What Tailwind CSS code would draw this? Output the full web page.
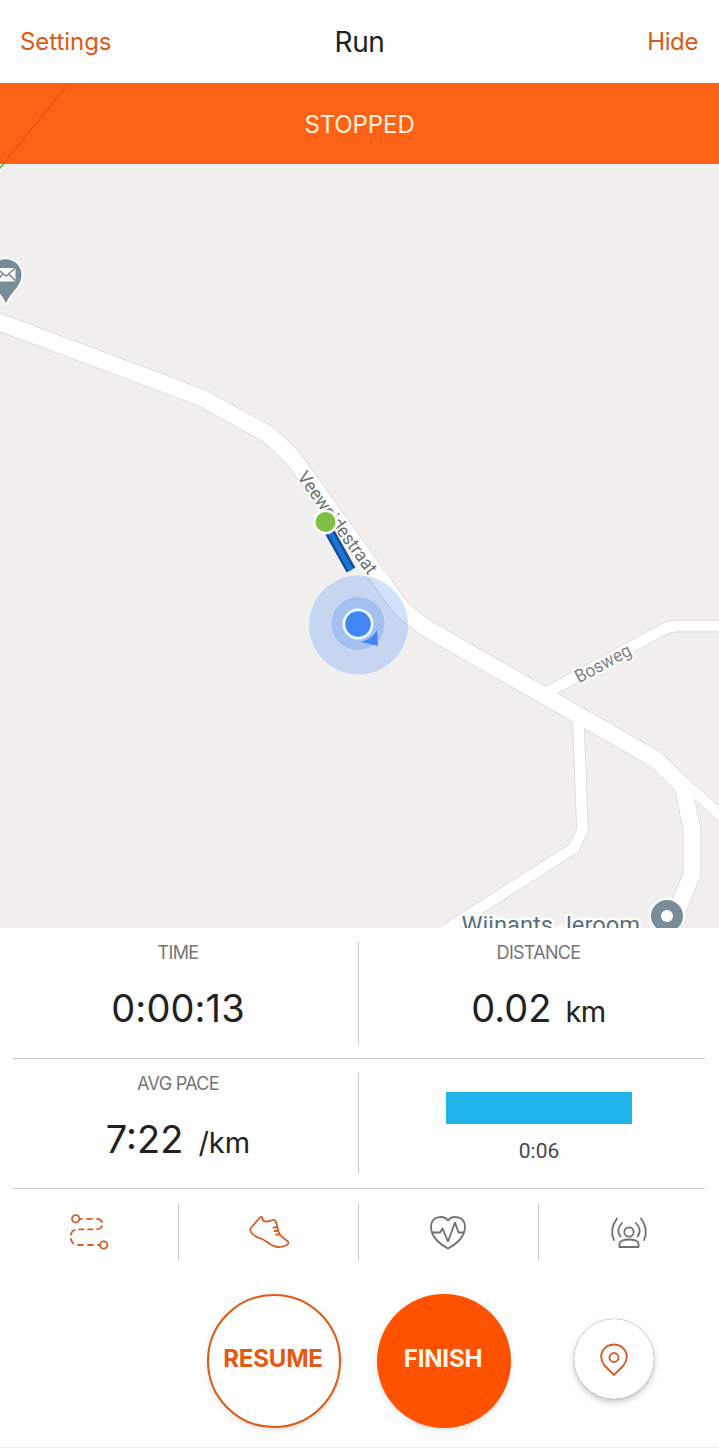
<!DOCTYPE html>
<html lang="en">
<head>
<meta charset="utf-8">
<title>Run</title>
<script src="https://cdn.jsdelivr.net/npm/@tailwindcss/browser@4"></script>
</head>
<body class="bg-[#fefefe] font-['Inter','Liberation_Sans',sans-serif] text-[#222]">
<div class="flex h-[1448px] w-[719px] flex-col overflow-hidden border-b border-[#ececec]">
  <header class="grid h-[83px] shrink-0 grid-cols-3 items-center px-5 text-[24px] text-[#dc5a14]">
    <span class="tracking-[-0.05px]">Settings</span>
    <h1 class="text-center text-[28px] tracking-[-0.4px] text-[#222]">Run</h1>
    <span class="pr-px text-right tracking-[-0.4px]">Hide</span>
  </header>

  <section class="relative h-[845px] shrink-0 overflow-hidden">
    <svg class="block" width="719" height="845" viewBox="0 83 719 845">
      <rect y="83" width="719" height="845" fill="#f1f0ef"/>
      <path d="M0 168L69 83" stroke="#6fc06a" stroke-width="2" fill="none"/>
      <g fill="none" stroke="#dcdcdc" stroke-linejoin="round">
        <g stroke-width="12.4">
          <path d="M550 691L665 628.500Q671 626 680 626H730"/>
          <path d="M578 715L582.500 830L574 848L444 931"/>
          <path d="M686 786L696 793L730 824"/>
        </g>
        <path stroke-width="18.400" d="M-5 320.500L201 397.500L265 432.500Q278 442 293 458L401 608Q414 620 430 630.500L655 759L683 786L692 829V874L679 906L664 940"/>
      </g>
      <g fill="none" stroke="#fff" stroke-linejoin="round">
        <g stroke-width="10.6">
          <path d="M548 692L665 628.500Q671 626 680 626H730"/>
          <path d="M578 712L582.500 830L574 848L444 931"/>
          <path d="M684 784L696 793L730 824"/>
        </g>
        <path stroke-width="16.600" d="M-5 320.500L201 397.500L265 432.500Q278 442 293 458L401 608Q414 620 430 630.500L655 759L683 786L692 829V874L679 906L664 940"/>
      </g>
      <path d="M6 306C3 294 -11 288 -11 275A16.750 16.750 0 0 1 22.500 275C22.500 288 9 294 6 306Z" fill="#788d98" stroke="#f8fdff" stroke-width="2"/>
      <path d="M-4 268H15.500V281.500H-4Z" fill="#fff"/>
      <path d="M-4 268L6 276L15.500 268M-4 281L3 274M15.500 281L9 274" fill="none" stroke="#788d98" stroke-width="1.600"/>

      <g font-family="Roboto, sans-serif" fill="#6c7479" stroke="#fff" stroke-linejoin="round" paint-order="stroke">
        <text transform="translate(296.500 477) rotate(54)" font-size="18.500" stroke-width="4" textLength="122" lengthAdjust="spacingAndGlyphs">Veeweidestraat</text>
        <text transform="translate(579 683.500) rotate(-28.500)" font-size="18.500" stroke-width="4" fill="#7e8384" textLength="61" lengthAdjust="spacingAndGlyphs">Bosweg</text>
        <text x="461.500" y="933" font-size="24.500" stroke-width="5" fill="#5b707b" textLength="178.500" lengthAdjust="spacingAndGlyphs">Wijnants Jeroom</text>
      </g>
      <circle cx="667" cy="916" r="17" fill="#788d98" stroke="#f8fdff" stroke-width="2"/>
      <circle cx="667" cy="916" r="6" fill="#fff"/>

      <path d="M328 529L351 570" stroke="#174f91" stroke-width="10"/>
      <path d="M328 529L351 570" stroke="#1b74d9" stroke-width="5"/>
      <circle cx="325.500" cy="522" r="12.500" fill="#fffef8"/>
      <circle cx="325.500" cy="522" r="10" fill="#7dc043"/>
      <circle cx="358.500" cy="625" r="49.500" fill="#4285f4" fill-opacity=".24"/>
      <circle cx="358" cy="623.500" r="26.500" fill="#4285f4" fill-opacity=".26"/>
      <path d="M377 630L378 646L361 642Q372 639 377 630Z" fill="#4285f4"/>
      <circle cx="358" cy="624" r="15.500" fill="#e9fbff"/>
      <circle cx="358" cy="624" r="12.800" fill="#4285f4"/>
    </svg>
    <div class="absolute inset-x-0 top-0 flex h-[81px] items-center justify-center bg-[#fd6216] pt-0.5 text-[24px] tracking-[-0.1px] text-[#fff1dc]">
      <svg class="absolute top-0 left-0" width="72" height="81" viewBox="0 83 72 81" fill="none"><path d="M0 168L69 83" stroke="#ec5a10" stroke-width="2"/></svg>
      STOPPED
    </div>
  </section>

  <section class="h-[261px] shrink-0 pr-[14px] pl-[13px]">
    <div class="flex h-[131px] border-b border-[#c9c9c9] py-[14px]">
      <div class="flex w-[346px] flex-col items-center border-r border-[#c9c9c9] pr-[15px]">
        <span class="text-[18px] leading-[22px] tracking-[-0.6px] text-[#757575]">TIME</span>
        <span class="mt-[21px] text-[38px] leading-[46px] tracking-[0.1px] whitespace-pre">0:00:13</span>
      </div>
      <div class="flex flex-1 flex-col items-center pl-[13px]">
        <span class="text-[18px] leading-[22px] tracking-[-0.7px] text-[#757575]">DISTANCE</span>
        <span class="mt-[21px] text-[38px] leading-[46px] whitespace-pre">0.02<span class="ml-[14px] text-[29px] tracking-[-0.6px]">km</span></span>
      </div>
    </div>
    <div class="flex h-[130px] border-b border-[#c9c9c9] py-[14px]">
      <div class="flex w-[346px] flex-col items-center border-r border-[#c9c9c9] pr-[15px]">
        <span class="text-[18px] leading-[22px] tracking-[-0.7px] text-[#757575]">AVG PACE</span>
        <span class="mt-[21px] text-[38px] leading-[46px] whitespace-pre">7:22<span class="ml-[15px] text-[29px]">/km</span></span>
      </div>
      <div class="flex flex-1 flex-col items-center pt-[19px] pl-[14px]">
        <div class="h-8 w-[186px] bg-[#21b4ea]"></div>
        <span class="mt-[15px] font-['Roboto',sans-serif] text-[21px] leading-6 text-[#484848]">0:06</span>
      </div>
    </div>
  </section>

  <nav class="grid h-[86px] shrink-0 grid-cols-[179px_180px_180px_180px] py-[14px]">
    <div class="border-r border-[#c9c9c9]">
      <svg width="178" height="58" viewBox="0 1203 178 58" fill="none" stroke="#d26029" stroke-width="1.800" stroke-linecap="round">
        <circle cx="75.700" cy="1218.800" r="3.700"/><circle cx="103.700" cy="1245" r="3.700"/>
        <path d="M79.500 1218.800H82M87 1218.800H92M97 1218.800Q101 1219 102 1222M102 1226Q100.500 1229.300 97 1229.300M92.500 1229.300H88M83.500 1229.300H79M74.500 1230Q71.500 1231 71 1234.500M70.800 1239Q71.500 1242 73.500 1243.500M78 1245H83M88 1245H93M98 1245H100"/>
      </svg>
    </div>
    <div class="border-r border-[#c9c9c9]">
      <svg width="179" height="58" viewBox="179 1203 179 58" fill="none" stroke="#d26029" stroke-width="1.800" stroke-linecap="round" stroke-linejoin="round">
        <path d="M250.500 1228.500L260 1217.500Q262.500 1216 262.500 1219Q263.500 1223.500 273 1220Q275.200 1219.500 276 1222L278.500 1231.500Q280 1236 284 1238.500L287.500 1241Q289.500 1243.500 287 1245Q283.500 1247 279 1247C271 1247 267.500 1241.500 263 1239.500C258 1237.500 253 1236.500 251 1232Q250 1229.800 250.500 1228.500ZM277 1227.500H273.500M278 1231H274.500M279.500 1234.500H276"/>
      </svg>
    </div>
    <div class="border-r border-[#c9c9c9]">
      <svg width="179" height="58" viewBox="359 1203 179 58" fill="none" stroke="#707070" stroke-width="1.800" stroke-linecap="round" stroke-linejoin="round">
        <path d="M448 1220.500C444 1215 431 1215.500 431 1227C431 1238 442 1245.500 448 1248.500C454 1245.500 465 1238 465 1227C465 1215.500 452 1215 448 1220.500ZM432 1232.500H440L442.500 1228.500L448 1241.500L455 1222.500L458.500 1232.500H464"/>
      </svg>
    </div>
    <div>
      <svg width="180" height="58" viewBox="539 1203 180 58" fill="none" stroke="#707070" stroke-width="1.800" stroke-linecap="round" stroke-linejoin="round">
        <circle cx="629" cy="1232" r="4.700"/>
        <path d="M619.500 1247V1243.500Q620.500 1239.500 629 1239.500Q637.500 1239.500 638.500 1243.500V1247ZM622 1223Q615.500 1230 620.500 1236.500M636 1223Q642.500 1230 637.500 1236.500M617 1218.500Q609 1229.500 614 1240M641 1218.500Q649 1229.500 644 1240"/>
      </svg>
    </div>
  </nav>

  <footer class="flex flex-1 items-start pt-[19px] pl-[207px] font-bold">
    <button class="h-[134px] w-[134px] rounded-full border-2 border-[#dc5a14] bg-white pr-0.5 pb-1 text-[24px] tracking-[-0.2px] text-[#e35a14] shadow-[0_2px_5px_rgba(0,0,0,.13)]">RESUME</button>
    <button class="ml-[36px] h-[134px] w-[134px] rounded-full bg-[#ff5200] pr-0.5 pb-1 text-[24px] tracking-[-0.2px] text-[#fff5e8] shadow-[0_2px_5px_rgba(0,0,0,.13)]">FINISH</button>
    <button class="mt-[25px] ml-[63px] flex h-[80px] w-[80px] items-center justify-center rounded-full bg-white shadow-[0_0_1px_rgba(0,0,0,.55),0_3px_6px_rgba(0,0,0,.22)]">
      <svg class="mt-0.5" width="30" height="36" viewBox="599 1342 30 36" fill="none" stroke="#d26029" stroke-width="1.900">
        <path d="M614 1375L604.500 1365.500C596.500 1355 604.500 1344.500 614 1344.500S631.500 1355 623.500 1365.500Z"/>
        <circle cx="614" cy="1357.500" r="4.500"/>
      </svg>
    </button>
  </footer>
</div>
</body>
</html>
